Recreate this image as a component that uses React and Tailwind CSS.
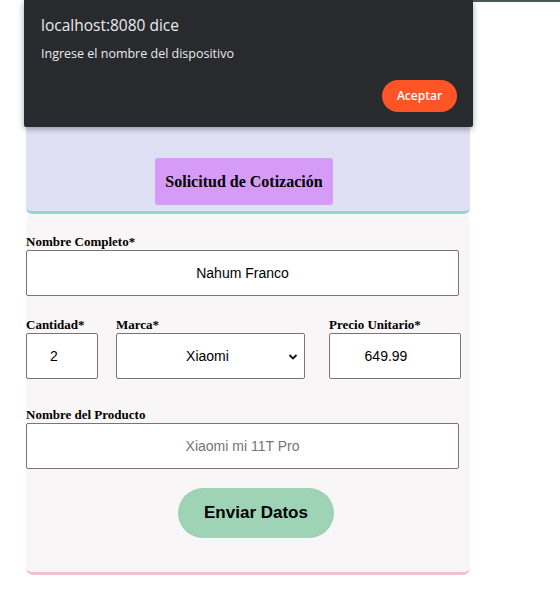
import React from "react";

export default function App() {
  const serif = { fontFamily: '"Liberation Serif", "Times New Roman", serif' };
  return (
    <div className="relative w-[560px] h-[606px] bg-white overflow-hidden" style={{ fontFamily: '"Liberation Sans", Arial, sans-serif' }}>
      {/* top thin bar */}
      <div className="absolute top-0 left-[473px] right-0 h-[2px] bg-[#4b585b]" />

      {/* Card */}
      <div className="ml-[26px] mt-[30px] w-[444px]">
        <div className="h-[184px] bg-[#e0e0f5] border-b-[3px] border-[#8fd8cf] rounded-b-[6px] flex items-end justify-center pb-[6px] pr-[8px]">
          <div className="w-[178px] h-[47px] bg-[#d59bf7] rounded-[3px] flex items-center justify-center text-[16px] font-bold text-black" style={serif}>
            Solicitud de Cotización
          </div>
        </div>
        <div className="bg-[#f9f6f7] border-b-[3px] border-[#f1c0d1] rounded-[7px] pt-[20px] pb-[34px]">
          <div className="text-[13px] font-bold leading-[16px] text-black" style={serif}>Nombre Completo*</div>
          <div className="w-[433px] h-[46px] bg-white border border-[#767676] rounded-[2px] flex items-center justify-center text-[14px] text-black">
            Nahum Franco
          </div>

          <div className="flex mt-[21px]">
            <div className="w-[72px]">
              <div className="text-[13px] font-bold leading-[16px]" style={serif}>Cantidad*</div>
              <div className="w-[72px] h-[46px] bg-white border border-[#767676] rounded-[2px] flex items-center justify-center text-[14px] pr-[16px]">2</div>
            </div>
            <div className="w-[189px] ml-[18px]">
              <div className="text-[13px] font-bold leading-[16px]" style={serif}>Marca*</div>
              <div className="relative w-[189px] h-[46px] bg-white border border-[#767676] rounded-[2px] flex items-center justify-center text-[14px] pr-[6px]">
                Xiaomi
                <svg className="absolute right-[6px] top-[19px]" width="10" height="8" viewBox="0 0 10 8">
                  <path d="M1.5 2 L5 5.5 L8.5 2" fill="none" stroke="#111" strokeWidth="1.8" />
                </svg>
              </div>
            </div>
            <div className="w-[132px] ml-[24px]">
              <div className="text-[13px] font-bold leading-[16px] whitespace-nowrap" style={serif}>Precio Unitario*</div>
              <div className="w-[132px] h-[46px] bg-white border border-[#767676] rounded-[2px] flex items-center justify-center text-[14px] pr-[18px]">649.99</div>
            </div>
          </div>

          <div className="mt-[27px] text-[13px] font-bold leading-[17px]" style={serif}>Nombre del Producto</div>
          <div className="w-[433px] h-[46px] bg-white border border-[#767676] rounded-[2px] flex items-center justify-center text-[14px] text-[#757575]">
            Xiaomi mi 11T Pro
          </div>

          <div className="flex mt-[19px] pl-[152px]">
            <div className="w-[156px] h-[50px] bg-[#9fd3b6] rounded-full flex items-center justify-center text-[17px] font-bold text-black">
              Enviar Datos
            </div>
          </div>
        </div>
      </div>

      {/* Dialog overlay */}
      <div className="absolute top-0 left-[24px] w-[449px] h-[127px] bg-[#292a2d] rounded-b-[2px] shadow-[0_2px_6px_rgba(0,0,0,0.35)]" style={{ fontFamily: '"Open Sans", "Noto Sans", sans-serif' }}>
        <div className="absolute left-[17px] top-[14px] text-[15.5px] text-[#e8eaed] leading-[22px]">localhost:8080 dice</div>
        <div className="absolute left-[17px] top-[45px] text-[12.5px] text-[#e8eaed] leading-[18px]">Ingrese el nombre del dispositivo</div>
        <div className="absolute left-[358px] top-[80px] w-[75px] h-[32px] bg-[#fe5526] rounded-full flex items-center justify-center text-[12px] font-semibold text-white">
          Aceptar
        </div>
      </div>
    </div>
  );
}
